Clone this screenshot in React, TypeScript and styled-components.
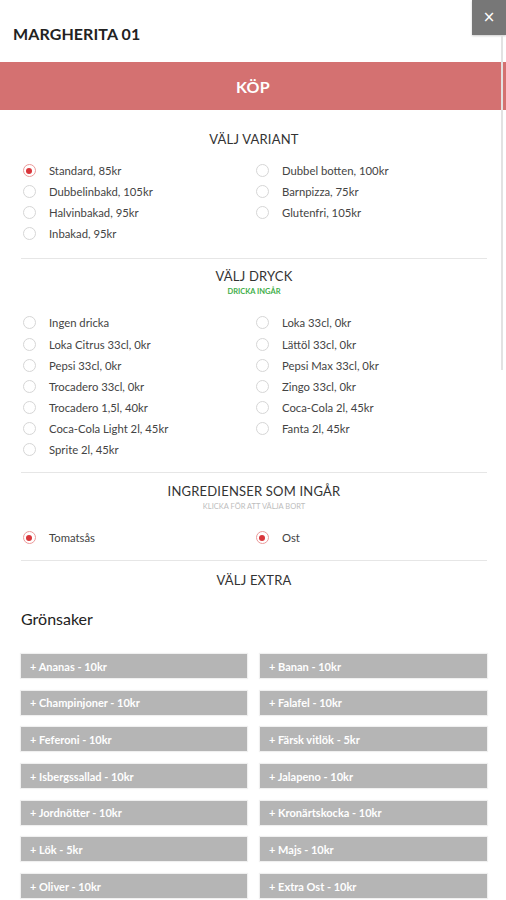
import React from "react";
import styled, { createGlobalStyle } from "styled-components";

const Global = createGlobalStyle`
  html, body { margin: 0; padding: 0; background: #fff; }
  body { font-family: Lato, "Open Sans", sans-serif; color: #333; }
  * { box-sizing: border-box; }
`;

const Page = styled.div`
  position: relative;
  width: 506px;
  min-height: 900px;
  overflow: hidden;
  background: #fff;
`;

const Header = styled.header`
  height: 62px;
  display: flex;
  align-items: center;
  padding: 4px 0 0 13px;
`;

const Title = styled.h1`
  margin: 0;
  font-size: 16px;
  font-weight: 700;
  color: #222;
  letter-spacing: 0.1px;
`;

const CloseButton = styled.button`
  position: absolute;
  top: 0;
  right: 0;
  width: 34px;
  height: 35px;
  border: none;
  background: #777;
  color: #fff;
  font-family: "DejaVu Sans", sans-serif;
  font-size: 15px;
  line-height: 35px;
  padding: 0;
  box-shadow: 0 1px 2px rgba(0, 0, 0, 0.2);
`;

const ScrollThumb = styled.div`
  position: absolute;
  top: 36px;
  right: 3px;
  width: 2px;
  height: 334px;
  background: #e2e2e2;
`;

const BuyBar = styled.button`
  display: block;
  width: 100%;
  height: 48px;
  border: none;
  background: #d47171;
  color: #fff;
  font-family: Lato, sans-serif;
  font-weight: 700;
  font-size: 16px;
  letter-spacing: 0.3px;
  padding: 0;
`;

const Content = styled.main`
  padding: 0 19px 0 21px;
`;

const Section = styled.section<{ $top: number; $bottom: number }>`
  padding: ${(p) => p.$top}px 0 ${(p) => p.$bottom}px;
  border-top: ${(p) => (p.$top > 15 ? "none" : "1px solid #e6e6e6")};
`;

const Heading = styled.h2`
  margin: 0;
  text-align: center;
  font-size: 13px;
  line-height: 16px;
  font-weight: 400;
  color: #333;
  letter-spacing: 0.2px;
`;

const Sub = styled.div<{ $color: string; $bold?: boolean }>`
  text-align: center;
  font-size: 7.5px;
  line-height: 10px;
  margin-top: 3px;
  color: ${(p) => p.$color};
  font-weight: ${(p) => (p.$bold ? 700 : 400)};
`;

const OptionGrid = styled.div<{ $gap: number }>`
  display: grid;
  grid-template-columns: 233px 233px;
  margin-top: ${(p) => p.$gap}px;
`;

const Option = styled.label`
  display: flex;
  align-items: center;
  height: 21.1px;
  padding-left: 1.5px;
  font-size: 11.3px;
  color: #444;
`;

const Radio = styled.span<{ $checked?: boolean }>`
  width: 13px;
  height: 13px;
  border-radius: 50%;
  border: 1px solid ${(p) => (p.$checked ? "#ec9a9a" : "#d6d6d6")};
  display: flex;
  align-items: center;
  justify-content: center;
  margin-right: 13.5px;
  flex-shrink: 0;
  &::after {
    content: "";
    width: 6px;
    height: 6px;
    border-radius: 50%;
    background: ${(p) => (p.$checked ? "#d9363b" : "transparent")};
  }
`;

const GroupTitle = styled.h3`
  margin: 21px 0 0;
  font-size: 16px;
  line-height: 20px;
  font-weight: 400;
  color: #222;
`;

const ExtraGrid = styled.div`
  display: grid;
  grid-template-columns: 226px 227px;
  column-gap: 13px;
  row-gap: 12.67px;
  margin-top: 25px;
`;

const ExtraButton = styled.button`
  height: 24px;
  border: none;
  background: #b5b5b5;
  color: #fff;
  font-family: Lato, sans-serif;
  font-size: 11px;
  font-weight: 700;
  text-align: left;
  padding: 0 0 0 9px;
  box-shadow: 0 0 1px 1px rgba(0, 0, 0, 0.06);
`;

type Opt = { label: string; checked?: boolean };

const Options = ({ items, gap }: { items: Opt[]; gap: number }) => (
  <OptionGrid $gap={gap}>
    {items.map((o) => (
      <Option key={o.label}>
        <Radio $checked={o.checked} />
        {o.label}
      </Option>
    ))}
  </OptionGrid>
);

const variants: Opt[] = [
  { label: "Standard, 85kr", checked: true },
  { label: "Dubbel botten, 100kr" },
  { label: "Dubbelinbakd, 105kr" },
  { label: "Barnpizza, 75kr" },
  { label: "Halvinbakad, 95kr" },
  { label: "Glutenfri, 105kr" },
  { label: "Inbakad, 95kr" },
];

const drinks: Opt[] = [
  { label: "Ingen dricka" },
  { label: "Loka 33cl, 0kr" },
  { label: "Loka Citrus 33cl, 0kr" },
  { label: "Lättöl 33cl, 0kr" },
  { label: "Pepsi 33cl, 0kr" },
  { label: "Pepsi Max 33cl, 0kr" },
  { label: "Trocadero 33cl, 0kr" },
  { label: "Zingo 33cl, 0kr" },
  { label: "Trocadero 1,5l, 40kr" },
  { label: "Coca-Cola 2l, 45kr" },
  { label: "Coca-Cola Light 2l, 45kr" },
  { label: "Fanta 2l, 45kr" },
  { label: "Sprite 2l, 45kr" },
];

const ingredients: Opt[] = [
  { label: "Tomatsås", checked: true },
  { label: "Ost", checked: true },
];

const extras = [
  "Ananas - 10kr",
  "Banan - 10kr",
  "Champinjoner - 10kr",
  "Falafel - 10kr",
  "Feferoni - 10kr",
  "Färsk vitlök - 5kr",
  "Isbergssallad - 10kr",
  "Jalapeno - 10kr",
  "Jordnötter - 10kr",
  "Kronärtskocka - 10kr",
  "Lök - 5kr",
  "Majs - 10kr",
  "Oliver - 10kr",
  "Extra Ost - 10kr",
];

export default function App() {
  return (
    <Page>
      <Global />
      <Header>
        <Title>MARGHERITA 01</Title>
      </Header>
      <CloseButton aria-label="Stäng">×</CloseButton>
      <BuyBar>KÖP</BuyBar>
      <Content>
        <Section $top={21} $bottom={14}>
          <Heading>VÄLJ VARIANT</Heading>
          <Options items={variants} gap={13} />
        </Section>
        <Section $top={9} $bottom={12}>
          <Heading>VÄLJ DRYCK</Heading>
          <Sub $color="#3fae49" $bold>DRICKA INGÅR</Sub>
          <Options items={drinks} gap={15} />
        </Section>
        <Section $top={10} $bottom={12}>
          <Heading>INGREDIENSER SOM INGÅR</Heading>
          <Sub $color="#bdbdbd">KLICKA FÖR ATT VÄLJA BORT</Sub>
          <Options items={ingredients} gap={15} />
        </Section>
        <Section $top={11} $bottom={40}>
          <Heading>VÄLJ EXTRA</Heading>
          <GroupTitle>Grönsaker</GroupTitle>
          <ExtraGrid>
            {extras.map((e) => (
              <ExtraButton key={e}>+ {e}</ExtraButton>
            ))}
          </ExtraGrid>
        </Section>
      </Content>
      <ScrollThumb />
    </Page>
  );
}
